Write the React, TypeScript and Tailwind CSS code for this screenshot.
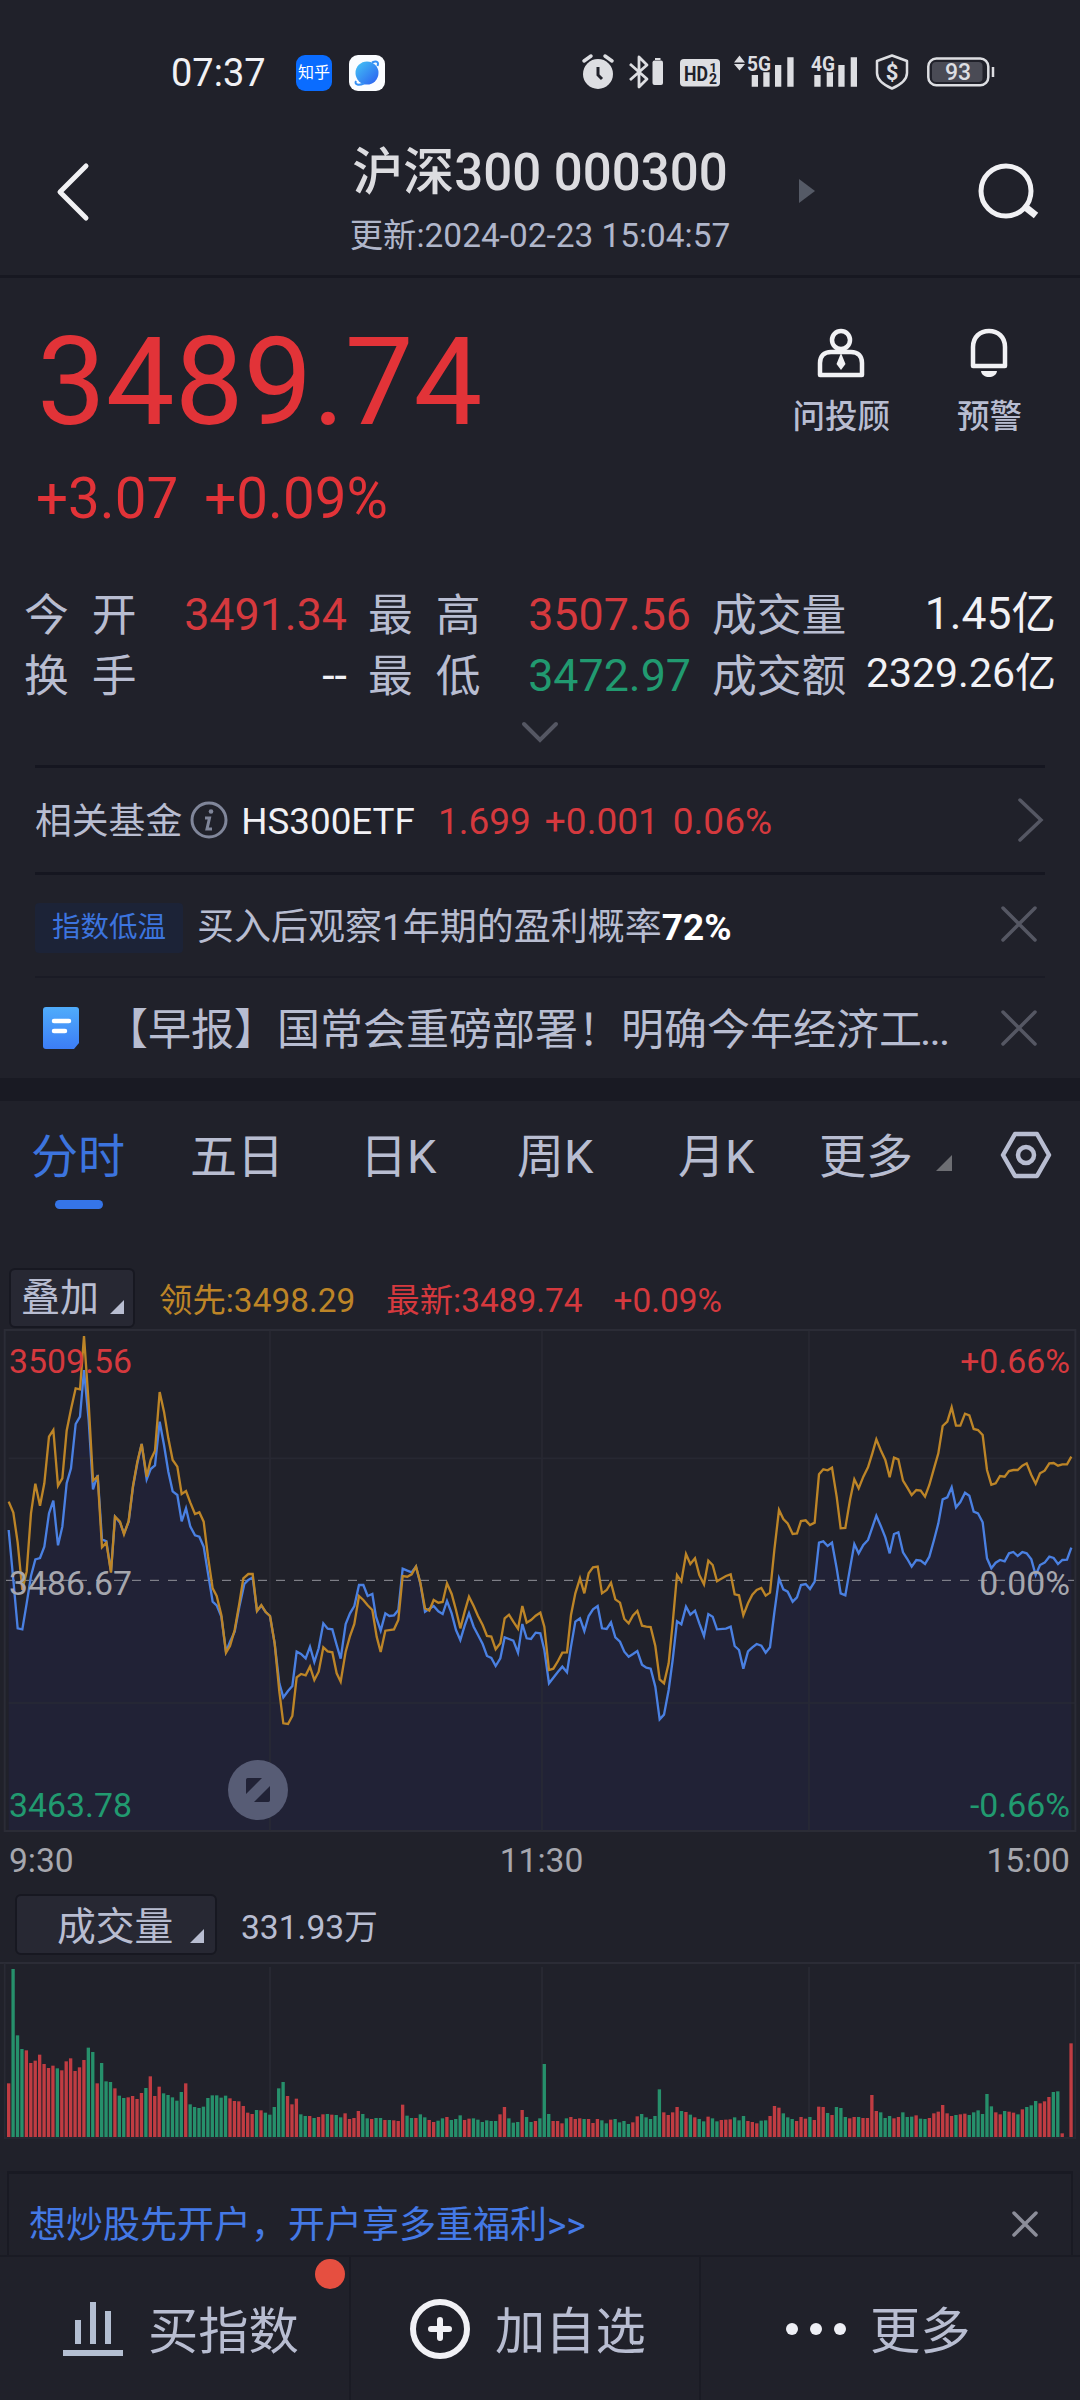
import React from "react";

const LATEST_LINE = [
  "26,630 40,780 53,925 67,928 80,850 93,768 106,718 120,714 133,680 147,580 160,542 174,676 187,620 200,490 213,445 227,312 240,290 252,150 266,300 279,508 293,465 306,658 319,664 333,755 345,590 360,608 372,640 386,605 399,500 412,430 425,372 440,478 452,447 465,436 479,305 492,375 505,455 518,514 532,525 545,604 558,565 571,620 585,646 598,650 611,680 624,760 638,845 650,856 664,890 678,995 690,965 704,935 718,860 733,792 745,780 758,772 771,873 784,857 797,876 810,888 824,970 838,1090 850,1132 864,1113 877,1098 890,995 903,1002 917,1015 930,980 943,1026 956,985 970,910 983,926 997,928 1010,975 1022,1016 1037,912 1050,880 1063,858 1077,795",
  "1090,795 1103,828 1117,822 1128,890 1142,932 1156,880 1168,888 1182,886 1195,870 1208,746 1222,752 1235,757 1248,740 1261,790 1275,875 1288,866 1301,858 1315,874 1328,882 1341,843 1355,880 1368,930 1381,960 1394,917 1407,880 1421,920 1434,945 1448,972 1461,1008 1474,1014 1487,1038 1501,1015 1514,952 1527,957 1540,962 1554,998 1567,912 1580,955 1593,957 1607,938 1621,940 1633,990 1647,1090 1660,1073 1674,1055 1687,1040 1701,1057 1713,980 1726,905 1740,895 1753,933 1766,888 1779,868 1793,858 1806,925 1820,927 1833,907 1846,952 1860,965 1873,995 1886,1010 1899,1002 1912,993 1926,1034 1939,1043 1952,1046 1966,1100 1979,1198 1992,1184 2006,1110 2018,1020 2031,904 2044,913 2058,860 2071,884 2085,872 2098,910 2112,948 2125,882 2138,890 2151,928",
  "2178,926 2192,920 2204,978 2217,990 2230,1046 2244,994 2257,982 2270,972 2284,977 2297,998 2310,982 2323,878 2337,775 2350,808 2363,815 2378,845 2391,832 2403,795 2417,792 2430,807 2444,785 2457,668 2470,664 2483,678 2496,668 2510,745 2522,820 2536,826 2550,745 2563,672 2576,700 2590,675 2604,660 2617,622 2629,587 2642,617 2656,652 2669,700 2682,642 2695,637 2709,697 2722,717 2735,740 2749,720 2762,722 2775,732 2788,710 2802,660 2815,610 2828,538 2842,532 2855,502 2868,562 2881,546 2895,518 2908,527 2921,575 2934,580 2948,607 2961,715 2974,745 2987,728 3000,720 3014,724 3027,700 3040,696 3053,708 3067,696 3080,700 3094,718 3107,765 3120,735 3134,728 3148,710 3161,714 3174,732 3187,720 3201,719 3214,683",
].join(" ");

const LEADING_LINE = [
  "26,545 40,578 53,668 67,810 80,755 93,580 106,491 120,557 133,490 147,350 160,330 174,497 187,475 200,332 213,268 227,205 240,208 252,48 266,250 279,482 293,470 306,682 319,668 333,758 345,590 360,605 372,643 386,603 399,498 412,425 425,372 440,470 452,420 465,392 479,216 492,275 505,355 518,420 532,440 545,522 558,513 571,548 585,582 598,577 611,605 624,710 638,805 650,828 664,885 678,998 690,978 704,930 718,850 730,775 745,762 758,762 771,873 784,855 797,876 810,888 824,970 838,1115 850,1210 864,1212 877,1188 890,1072 903,1062 917,1066 930,1040 943,1080 956,1055 970,982 983,994 997,997 1010,1060 1022,1085 1037,995 1050,948 1063,912 1077,828",
  "1090,840 1103,856 1117,870 1130,950 1142,996 1156,932 1182,928 1195,900 1208,768 1222,770 1235,763 1248,740 1261,788 1275,865 1288,872 1301,840 1315,848 1328,846 1341,790 1355,822 1368,870 1381,925 1394,875 1407,830 1421,858 1434,888 1448,915 1461,948 1474,950 1487,988 1501,970 1514,895 1527,884 1540,905 1554,926 1567,858 1580,908 1593,900 1607,887 1621,878 1633,920 1647,1050 1660,1046 1674,1023 1687,998 1701,997 1713,885 1726,820 1740,775 1753,820 1766,760 1779,742 1793,740 1806,820 1820,810 1833,788 1846,838 1860,848 1873,897 1886,910 1899,886 1912,873 1926,917 1939,920 1952,921 1966,978 1979,1078 1992,1090 2006,1030 2018,910 2031,765 2044,784 2058,702 2071,732 2085,715 2098,765 2112,793 2125,722 2138,735 2151,784",
  "2178,768 2192,763 2204,823 2217,826 2230,886 2244,850 2257,824 2270,810 2284,804 2297,827 2310,818 2323,690 2337,570 2350,597 2363,610 2378,642 2391,640 2403,603 2417,601 2430,615 2444,608 2457,463 2470,448 2483,451 2496,443 2510,530 2522,625 2536,624 2550,540 2563,478 2576,505 2590,470 2604,442 2617,400 2629,358 2642,390 2656,420 2669,472 2682,413 2695,418 2709,482 2722,503 2735,525 2749,510 2762,512 2775,530 2788,495 2802,445 2815,400 2828,318 2842,305 2855,262 2868,317 2881,317 2895,281 2908,286 2921,327 2934,330 2948,345 2961,450 2974,494 2987,490 3000,468 3014,470 3027,453 3040,450 3053,450 3067,437 3080,430 3094,465 3107,491 3120,460 3134,452 3148,430 3161,429 3174,437 3187,433 3201,433 3214,410",
].join(" ");

// one entry per minute: r = up, g = down, followed by the y of the bar's top
const VOLUME_BARS = [
  "r760 g417 g616 g657 r661 r699 r692 r674 r702 r714 r707 g715 r721 r694 r685 r723 r712 r690 g653 g666 r760 g699 g754 g756 r775 g797 g804 r802 r798 r807",
  "r789 g774 r739 r798 r770 g790 g795 g802 g812 g786 r760 g823 g831 g834 g830 g804 g796 g796 g803 g797 r805 r813 r814 r828 r848 r852 g840 r841 g848 g854",
  "g831 g775 g756 r798 r823 r806 g853 g858 r858 g864 r861 r853 g852 r854 g855 g862 r850 r867 r864 r843 g852 g865 r867 g864 g864 r870 g870 r871 r873 r824",
  "g857 g864 r864 g853 g862 r870 r876 g872 g865 r861 g870 g867 g856 r870 r866 g865 g869 g876 g871 g873 g873 r853 r831 g865 g878 g876 r840 g861 g876 r873",
  "g865 g702 g852 r873 r873 r880 g865 r861 r867 r865 g867 r867 r879 r867 g871 g880 r869 g867 g877 g873 g882 r877 r859 g852 g862 g867 g858 g778 r847 r855",
  "r847 r831 g843 r846 g854 r862 g867 g874 r860 g865 g874 r870 r869 r868 g862 g871 g858 r873 r876 r880 g872 g871 r858 r828 r833 g850 g862 g867 r873 r861",
  "r866 g861 r870 r830 r831 g849 r855 g831 g834 g861 r865 r861 g861 r864 r864 r795 r843 g847 g864 g858 r865 r861 g847 g861 g860 r856 g866 g867 r864 r850",
  "r845 r825 r850 r858 g855 r853 r851 g855 g847 g841 g852 g792 g829 r847 r853 g843 r845 r848 g853 r838 g831 g826 g813 r820 r814 r801 g786 g784 r910 r921",
  "r640",
]
  .join(" ")
  .split(" ");

const StatusBar = () => (
  <div className="flex h-[112px] items-center pt-8 pl-[171px]">
    <span className="w-[125px] pt-px text-[38px] leading-10 text-[#f1f1f4]">07:37</span>
    <div className="mt-px flex h-9 w-9 items-center justify-center rounded-[9px] bg-[#0a6cff] text-[16px] leading-none text-white">
      知乎
    </div>
    <svg className="mt-px ml-[17px]" width="36" height="36" viewBox="0 0 36 36">
      <defs>
        <linearGradient id="planet" x1="0" y1="0" x2="1" y2="1">
          <stop offset="0" stopColor="#45c6f5" />
          <stop offset="1" stopColor="#2a5cf0" />
        </linearGradient>
      </defs>
      <rect width="36" height="36" rx="9" fill="#fafcff" />
      <circle cx="18" cy="18" r="11.5" fill="url(#planet)" />
      <path d="M7 26C5 30 10 30.500 15 28.500M23 7.500C28 5.500 30 7 28.500 11" stroke="#3690f5" strokeWidth="2" fill="none" />
    </svg>

    <svg className="ml-[196px]" width="420" height="40" viewBox="0 0 420 40" fill="#dddee2">
      {/* alarm */}
      <circle cx="17" cy="22" r="15" />
      <path d="M3 9L10 4M31 9L24 4" stroke="#dddee2" strokeWidth="3.500" strokeLinecap="round" />
      <path d="M17 15V23L21 27" stroke="#20212a" strokeWidth="3" fill="none" />
      {/* bluetooth */}
      <path d="M49 12L66 27L58 35V5L66 13L49 28" stroke="#dddee2" strokeWidth="2.800" fill="none" strokeLinejoin="round" />
      <rect x="71.500" y="8.500" width="10.500" height="24.500" rx="2" />
      <rect x="74" y="6" width="5.500" height="2" />
      {/* hd */}
      <rect x="99" y="7" width="40" height="27.500" rx="4" />
      <text x="103" y="28.500" fontSize="20.500" fontWeight="700" fill="#20212a" textLength="24" lengthAdjust="spacingAndGlyphs">HD</text>
      <text x="128.500" y="20" fontSize="13" fontWeight="700" fill="#20212a">1</text>
      <text x="128" y="32" fontSize="14" fontWeight="700" fill="#20212a">2</text>
      {/* 5g */}
      <path d="M153 10.500L158.500 3.500L164 10.500ZM153 12L158.500 18.500L164 12Z" />
      <text x="166" y="18.500" fontSize="21" fontWeight="700" textLength="24" lengthAdjust="spacingAndGlyphs">5G</text>
      <path d="M170.700 23h6.300v11.700h-6.300zM182.300 20.300h6.300v14.400h-6.300zM194 13h6.300v21.700h-6.300zM206.300 5.300h6.300v29.400h-6.300z" />
      {/* 4g */}
      <text x="230" y="18.500" fontSize="21" fontWeight="700" textLength="24" lengthAdjust="spacingAndGlyphs">4G</text>
      <path d="M233.300 23h6.300v11.700h-6.300zM245.700 20.300h6.300v14.400h-6.300zM257.300 13h6.300v21.700h-6.300zM269.700 5.300h6.300v29.400h-6.300z" />
      {/* shield */}
      <path d="M311 3.500L326 9V21C326 28 319 33 311 36.500C303 33 296 28 296 21V9Z" stroke="#dddee2" strokeWidth="2.500" fill="none" strokeLinejoin="round" />
      <text x="311" y="28" fontSize="22" fontWeight="700" textAnchor="middle">$</text>
      {/* battery */}
      <rect x="347.300" y="6.600" width="60" height="26.600" rx="8" fill="none" stroke="#dddee2" strokeWidth="2.500" />
      <rect x="351" y="10" width="50.500" height="20" rx="4" fill="#4a4b55" />
      <text x="377" y="28.200" fontSize="23" fontWeight="500" textAnchor="middle">93</text>
      <path d="M412 15V25" stroke="#dddee2" strokeWidth="2.500" />
    </svg>
  </div>
);

const Header = () => (
  <header className="grid h-[166px] grid-cols-[345px_390px_345px] items-start border-b-3 border-[#171821]">
    <svg className="mt-[50px] ml-[55px]" width="36" height="60" viewBox="0 0 36 60" fill="none" stroke="#f1f1f4" strokeWidth="5" strokeLinecap="round" strokeLinejoin="round">
      <path d="M31 4L5 30L31 56" />
    </svg>
    <div className="flex flex-col items-center pt-[30px] whitespace-nowrap">
      <h1 className="text-[51px] leading-[62px] font-medium text-[#dcdce0]">沪深300 000300</h1>
      <p className="text-[33.4px] leading-[63px] text-[#b0b6ca]">更新:2024-02-23 15:04:57</p>
    </div>
    <div className="flex pt-[50px] pl-[64px]">
      <svg className="mt-[17px]" width="16" height="24" viewBox="0 0 16 24" fill="#555a66">
        <path d="M0 0L16 12L0 24Z" />
      </svg>
      <svg className="ml-[162px]" width="64" height="60" viewBox="0 0 64 60" fill="none" stroke="#f1f1f4" strokeWidth="5">
        <circle cx="29" cy="29" r="25" />
        <path d="M47 44L59 53.500" strokeWidth="7" />
      </svg>
    </div>
  </header>
);

const Price = () => (
  <section className="flex h-[282px] justify-between">
    <div className="pl-[36px] whitespace-nowrap text-[#e23338]">
      <div className="mt-[43px] ml-px text-[122.5px] leading-[122px]">3489.74</div>
      <div className="mt-[24px] flex gap-[26px] text-[56.5px] leading-[64px]">
        <span>+3.07</span>
        <span>+0.09%</span>
      </div>
    </div>
    <div className="flex gap-[67px] pt-[49px] pr-[58px] text-[32.5px] leading-[44px] font-medium whitespace-nowrap text-[#b8bdd1]">
      <div className="flex flex-col items-center">
        <svg width="48" height="52" viewBox="0 0 48 52" fill="none" stroke="#f1f1f4" strokeWidth="4.500">
          <circle cx="24" cy="13" r="9" />
          <path d="M3 48V36C3 29 7 25 14 25H34C41 25 45 29 45 36V48Z" strokeLinejoin="round" />
          <path d="M24 26L28.500 37L24 43L19.500 37Z" fill="#f1f1f4" stroke="none" />
        </svg>
        <span className="mt-[16px]">问投顾</span>
      </div>
      <div className="flex flex-col items-center">
        <svg width="40" height="52" viewBox="0 0 40 52" fill="none" stroke="#f1f1f4" strokeWidth="4.500">
          <path d="M4 39V20C4 10 11 4 20 4C29 4 36 10 36 20V39Z" strokeLinejoin="round" />
          <path d="M12 44H28C27 52 13 52 12 44Z" fill="#f1f1f4" stroke="none" />
        </svg>
        <span className="mt-[16px]">预警</span>
      </div>
    </div>
  </section>
);

const Quotes = () => (
  <section className="h-[205px] pt-[25px]">
    <div className="grid grid-cols-[323px_323px_344px] gap-x-[21px] pl-[24px] text-[44.8px] leading-[61px] whitespace-nowrap text-[#b8bdd1]">
      <div className="flex justify-between">
        <span className="flex gap-[23px]"><i className="not-italic">今</i><i className="not-italic">开</i></span>
        <span className="-mt-px text-[#d5393e]">3491.34</span>
      </div>
      <div className="flex justify-between">
        <span className="flex gap-[23px]"><i className="not-italic">最</i><i className="not-italic">高</i></span>
        <span className="-mt-px text-[#d5393e]">3507.56</span>
      </div>
      <div className="flex justify-between">
        <span>成交量</span>
        <span className="-mt-px text-[44.5px] text-[#f1f1f5]">1.45亿</span>
      </div>
      <div className="flex justify-between">
        <span className="flex gap-[23px]"><i className="not-italic">换</i><i className="not-italic">手</i></span>
        <span className="-mt-px text-[#f1f1f5]">--</span>
      </div>
      <div className="flex justify-between">
        <span className="flex gap-[23px]"><i className="not-italic">最</i><i className="not-italic">低</i></span>
        <span className="-mt-px text-[#219a70]">3472.97</span>
      </div>
      <div className="flex justify-between">
        <span>成交额</span>
        <span className="-mt-[3px] text-[41px] text-[#f1f1f5]">2329.26亿</span>
      </div>
    </div>
    <svg className="mx-auto mt-[14px]" width="38" height="22" viewBox="0 0 38 22" fill="none" stroke="#555763" strokeWidth="4" strokeLinecap="round">
      <path d="M3 3L19 19L35 3" />
    </svg>
  </section>
);

const CloseIcon = ({ className }: { className: string }) => (
  <svg className={className} width="36" height="36" viewBox="0 0 36 36" fill="none" stroke="#555763" strokeWidth="3.500" strokeLinecap="round">
    <path d="M2 2L34 34M34 2L2 34" />
  </svg>
);

const News = () => (
  <section className="px-[35px] whitespace-nowrap text-[#b8bdd1]">
    <div className="flex h-[107px] items-center border-t-3 border-[#151620] text-[36.8px] leading-[50px]">
      <span className="mt-[3px]">相关基金</span>
      <svg className="ml-[8px]" width="38" height="38" viewBox="0 0 38 38" fill="none" stroke="#80869a" strokeWidth="3">
        <circle cx="19" cy="19" r="17" />
        <path d="M15 17H19.500L17 28H22" />
        <circle cx="21" cy="10.500" r="2.300" fill="#80869a" stroke="none" />
      </svg>
      <span className="mt-[3px] ml-[13px] text-[36.8px] text-[#f1f1f5]">HS300ETF</span>
      <span className="mt-[3px] ml-[23px] flex gap-[14px] text-[37px] text-[#d5393e]">
        <span>1.699</span>
        <span>+0.001</span>
        <span>0.06%</span>
      </span>
      <svg className="ml-auto" width="28" height="44" viewBox="0 0 28 44" fill="none" stroke="#555763" strokeWidth="3.500" strokeLinecap="round">
        <path d="M3 2L24 22L3 42" />
      </svg>
    </div>
    <div className="flex h-[104px] items-center border-t-3 border-[#151620] pt-px text-[37px] leading-[50px]">
      <span className="mt-[3px] flex h-[50px] w-[148px] items-center justify-center rounded bg-[#1c2337] text-[28.5px] text-[#3c74de]">指数低温</span>
      <span className="mt-[4px] ml-[14px]">
        买入后观察1年期的盈利概率<b className="font-bold text-white">72%</b>
      </span>
      <CloseIcon className="mr-2 mb-[4px] ml-auto" />
    </div>
    <div className="flex h-[101px] items-center border-t-2 border-[#1a1b25] text-[43px] leading-[56px]">
      <svg className="ml-2" width="36" height="42" viewBox="0 0 36 42">
        <defs>
          <linearGradient id="doc" x1="0" y1="0" x2="0" y2="1">
            <stop offset="0" stopColor="#4facfb" />
            <stop offset="1" stopColor="#3c7df6" />
          </linearGradient>
        </defs>
        <path d="M3 0H33Q36 0 36 3V36L31 42H3Q0 42 0 39V3Q0 0 3 0Z" fill="url(#doc)" />
        <path d="M11 14H26M11 24H22" stroke="#fff" strokeWidth="4.500" strokeLinecap="round" />
      </svg>
      <span className="mt-[5px] ml-[26px]">
        【早报】国常会重磅部署！明确今年经济工<span className="-ml-[2px] tracking-[-1.8px]">...</span>
      </span>
      <CloseIcon className="mr-2 ml-auto" />
    </div>
  </section>
);

const Tabs = () => (
  <nav className="flex h-[173px] items-start pt-[25px] pl-[31px] text-[47px] leading-[62px] whitespace-nowrap text-[#b8bdd1]">
    <div className="flex w-[159px] flex-col text-[#3c74de]">
      分时
      <span className="mt-[12px] ml-[24px] h-[9px] w-12 rounded-full bg-[#3575e8]" />
    </div>
    <span className="w-[170px]">五日</span>
    <span className="w-[157px]">日K</span>
    <span className="w-[161px]">周K</span>
    <span className="w-[141px]">月K</span>
    <span>更多</span>
    <svg className="mt-[29px] ml-[23px]" width="16" height="16" viewBox="0 0 16 16" fill="#6d6e73">
      <path d="M16 0V16H0Z" />
    </svg>
    <svg className="mt-[5px] ml-[48px]" width="52" height="48" viewBox="0 0 52 48" fill="none" stroke="#b8bdd1" strokeWidth="4.500">
      <path d="M15 3H37L49 24L37 45H15L3 24Z" strokeLinejoin="round" />
      <circle cx="26" cy="24" r="8" />
    </svg>
  </nav>
);

const Corner = ({ className }: { className: string }) => (
  <svg className={className} width="14" height="14" viewBox="0 0 14 14" fill="#b8bdd1">
    <path d="M14 0V14H0Z" />
  </svg>
);

const MinuteChart = () => (
  <section className="relative h-[521px]">
    <svg width="1080" height="521" viewBox="0 0 3240 1563" fill="none">
      <polygon points={`26,1533 ${LATEST_LINE} 3214,1533`} fill="#212236" />
      <g stroke="#2b2c36" strokeWidth="6">
        <path d="M14 30H3226V1533H14Z" />
        <path d="M26 415H3226M26 1149H3226M810 30V1533M1626 30V1533M2427 30V1533" strokeWidth="5" opacity="0.7" />
      </g>
      <path d="M18 781H3222" stroke="#92939b" strokeWidth="3" strokeDasharray="27 27" />
      <polyline points={LATEST_LINE} stroke="#4a80e2" strokeWidth="7" />
      <polyline points={LEADING_LINE} stroke="#bd8527" strokeWidth="7" />
      <circle cx="774" cy="1410" r="90" fill="#575c75" />
      <path d="M738 1379Q738 1374 743 1374H786L738 1422ZM810 1398V1441Q810 1446 805 1446H762Z" fill="#212236" />
    </svg>
    <div className="absolute inset-x-[9px] top-[22px] bottom-[15px] flex flex-col justify-between text-[33.8px] leading-[40px]">
      <div className="flex justify-between pr-px text-[#d5393e]"><span>3509.56</span><span>+0.66%</span></div>
      <div className="flex justify-between pr-px text-[#a6a7ae]"><span>3486.67</span><span>0.00%</span></div>
      <div className="flex justify-between pr-px text-[#219a70]"><span>3463.78</span><span>-0.66%</span></div>
    </div>
  </section>
);

const VolumeChart = () => (
  <svg className="block" width="1080" height="183" viewBox="0 0 3240 549" fill="none">
    <path d="M0 12H3240" stroke="#2b2c36" strokeWidth="6" />
    <path d="M14 12V540M810 24V540M1626 24V540M2427 24V540M3226 12V540M14 537H3226" stroke="#292a34" strokeWidth="5" />
    {VOLUME_BARS.map((bar, i) => {
      const top = Number(bar.slice(1));
      return (
        <rect
          key={i}
          x={21 + i * 13.28}
          y={top - 387}
          width="10"
          height={921 - top}
          fill={bar[0] === "r" ? "#c03c42" : "#26906b"}
        />
      );
    })}
  </svg>
);

const BottomBar = () => (
  <footer className="grid h-[145px] grid-cols-[351px_350px_379px] border-t-2 border-[#1a1b24] text-[50.3px] leading-[70px] whitespace-nowrap text-[#b8bdd1]">
    <div className="relative flex items-center border-r-2 border-[#1a1b24] pl-[62px]">
      <svg width="62" height="56" viewBox="0 0 62 56" fill="#b4bfd2">
        <path d="M1 49h60v6H1zM13 19h6v24h-6zM28 1h6v42h-6zM43 10h6v33h-6z" />
      </svg>
      <span className="mt-[6px] ml-[24px]">买指数</span>
      <span className="absolute top-[2px] right-[4px] h-[30px] w-[30px] rounded-full bg-[#e64f40]" />
    </div>
    <div className="flex items-center border-r-2 border-[#1a1b24] pl-[58px]">
      <svg width="62" height="62" viewBox="0 0 62 62" fill="none" stroke="#f1f1f5" strokeWidth="6">
        <circle cx="31" cy="31" r="27" />
        <path d="M31 22V40M22 31H40" strokeLinecap="round" />
      </svg>
      <span className="mt-[6px] ml-[24px]">加自选</span>
    </div>
    <div className="flex items-center pl-[84px]">
      <svg width="62" height="12" viewBox="0 0 62 12" fill="#eeeff5">
        <circle cx="7" cy="6" r="6" />
        <circle cx="31" cy="6" r="6" />
        <circle cx="55" cy="6" r="6" />
      </svg>
      <span className="mt-[6px] ml-[23px]">更多</span>
    </div>
  </footer>
);

export default function App() {
  return (
    <main className="flex h-[2400px] w-[1080px] flex-col overflow-hidden bg-[#20212a] font-[Roboto,'Noto_Sans_CJK_SC',sans-serif]">
      <StatusBar />
      <Header />
      <Price />
      <Quotes />
      <News />
      <div className="mt-px h-[23px] bg-[#191a23]" />
      <Tabs />
      <div className="flex h-[46px] items-center pl-[9px] text-[33.4px] leading-[44px] whitespace-nowrap">
        <div className="mt-[2px] flex h-[60px] w-[126px] shrink-0 items-center rounded-md border-2 border-[#171821] bg-[#272833] pl-[10px] text-[39px] text-[#b8bdd1]">
          叠加
          <Corner className="mt-[18px] ml-[11px]" />
        </div>
        <span className="mt-[7px] ml-[24px] text-[#bd8527]">领先:3498.29</span>
        <span className="mt-[7px] ml-[31px] text-[#d5393e]">最新:3489.74</span>
        <span className="mt-[7px] ml-[31px] text-[#d5393e]">+0.09%</span>
      </div>
      <MinuteChart />
      <div className="grid h-[40px] grid-cols-3 items-center px-[9px] text-[33.6px] leading-[40px] text-[#a6a7ae]">
        <span>9:30</span>
        <span className="pl-[3px] text-center">11:30</span>
        <span className="pr-px text-right">15:00</span>
      </div>
      <div className="flex h-[78px] items-center pt-2 pl-[15px] text-[33.6px] leading-[44px] whitespace-nowrap text-[#b8bdd1]">
        <div className="flex h-[61px] w-[202px] items-center rounded-md border-2 border-[#171821] bg-[#272833] pt-[5px] pl-[40px] text-[38.8px]">
          成交量
          <Corner className="mt-[18px] ml-[17px]" />
        </div>
        <span className="mt-[7px] ml-[24px]">331.93万</span>
      </div>
      <VolumeChart />
      <div className="mx-[7px] mt-[29px] flex h-[84px] items-center border-x-2 border-t-3 border-[#191a23] pt-5 pl-[20px] text-[37px] leading-[50px] whitespace-nowrap text-[#4479e6]">
        <span className="mt-[2px]">想炒股先开户，开户享多重福利&gt;&gt;</span>
        <svg className="mr-[33px] mb-[2px] ml-auto" width="26" height="26" viewBox="0 0 26 26" fill="none" stroke="#8b8d99" strokeWidth="3.500" strokeLinecap="round">
          <path d="M2 2L24 24M24 2L2 24" />
        </svg>
      </div>
      <BottomBar />
    </main>
  );
}
